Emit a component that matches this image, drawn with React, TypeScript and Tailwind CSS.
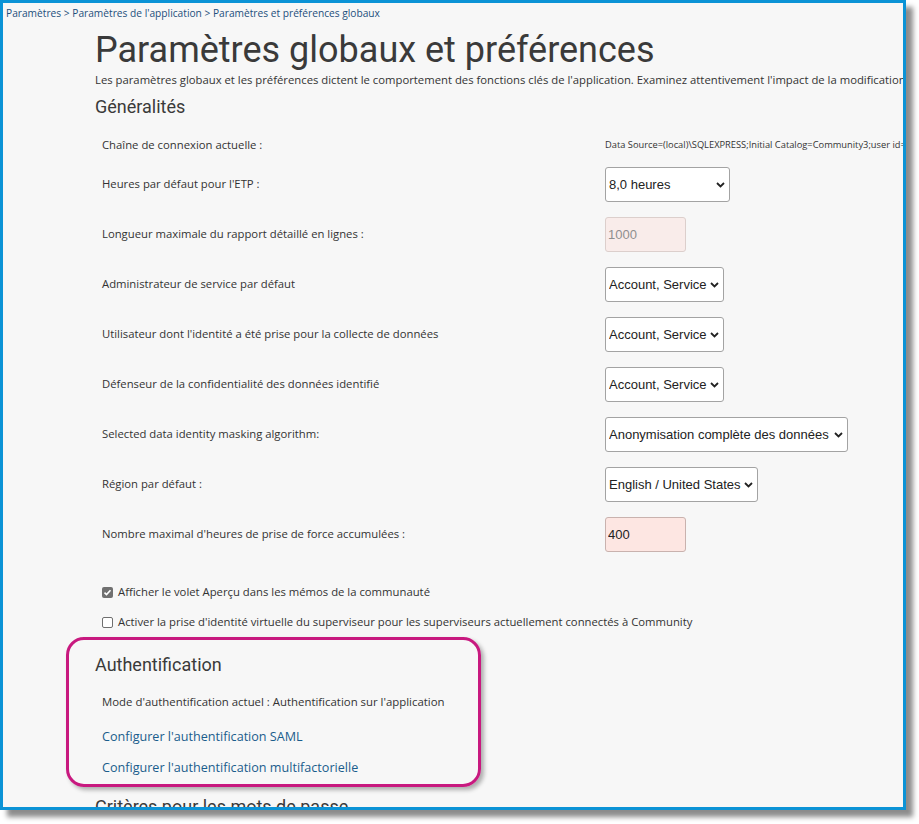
import React from 'react';

const ui = "font-['Open_Sans',sans-serif]";
const heading = "font-['Roboto',sans-serif]";

type Field =
  | { kind: 'select'; label: string; value: string; width: string }
  | { kind: 'input'; label: string; value: string; disabled?: boolean };

const fields: Field[] = [
  { kind: 'select', label: "Heures par défaut pour l'ETP :", value: '8,0 heures', width: 'w-[125px]' },
  { kind: 'input', label: 'Longueur maximale du rapport détaillé en lignes :', value: '1000', disabled: true },
  { kind: 'select', label: 'Administrateur de service par défaut', value: 'Account, Service', width: 'w-[119px]' },
  { kind: 'select', label: "Utilisateur dont l'identité a été prise pour la collecte de données", value: 'Account, Service', width: 'w-[119px]' },
  { kind: 'select', label: 'Défenseur de la confidentialité des données identifié', value: 'Account, Service', width: 'w-[119px]' },
  { kind: 'select', label: 'Selected data identity masking algorithm:', value: 'Anonymisation complète des données', width: 'w-[243px]' },
  { kind: 'select', label: 'Région par défaut :', value: 'English / United States', width: 'w-[153px]' },
  { kind: 'input', label: "Nombre maximal d'heures de prise de force accumulées :", value: '400' },
];

const Chevron = () => (
  <svg width="9" height="6" viewBox="0 0 9 6" className="pointer-events-none absolute right-[5px] top-1/2 -translate-y-1/2">
    <path d="M1 1l3.5 3.5L8 1" fill="none" stroke="#222" strokeWidth="1.8" />
  </svg>
);

const SelectBox = ({ value, width }: { value: string; width: string }) => (
  <div className={`relative h-[35px] shrink-0 ${width}`}>
    <select
      defaultValue={value}
      className="h-full w-full appearance-none rounded-[3px] border border-[#a3a3a3] bg-white pl-[3px] pr-[12px] font-['Liberation_Sans',Arial,sans-serif] text-[13px] text-[#222] outline-none"
    >
      <option>{value}</option>
    </select>
    <Chevron />
  </div>
);

const NumberBox = ({ value, disabled }: { value: string; disabled?: boolean }) => (
  <input
    defaultValue={value}
    disabled={disabled}
    className={
      disabled
        ? "h-[35px] w-[81px] shrink-0 rounded-[3px] border border-[#dccfcc] bg-[#f9ecea] px-[2px] font-['Liberation_Sans',Arial,sans-serif] text-[13px] text-[#8f8f8f]"
        : "h-[35px] w-[81px] shrink-0 rounded-[3px] border border-[#c9b2ae] bg-[#fde6e2] px-[2px] font-['Liberation_Sans',Arial,sans-serif] text-[13px] text-[#222]"
    }
  />
);

const Check = ({ checked }: { checked?: boolean }) =>
  checked ? (
    <span className="flex h-[11px] w-[11px] shrink-0 items-center justify-center rounded-[2px] bg-[#707070]">
      <svg width="9" height="9" viewBox="0 0 9 9">
        <path d="M1.5 4.6l2 2 4-4.4" fill="none" stroke="#fff" strokeWidth="1.6" />
      </svg>
    </span>
  ) : (
    <span className="h-[11px] w-[11px] shrink-0 rounded-[2px] border border-[#6f6f6f] bg-white" />
  );

const App: React.FC = () => {
  return (
    <div className="h-[824px] w-[919px] overflow-hidden bg-white">
      <div className="h-[810px] w-[906px] overflow-hidden border-[3px] border-[#0b93d6] bg-[#f7f7f7] shadow-[7px_7px_5px_rgba(0,0,0,0.45)]">
        {/* breadcrumb */}
        <div className={`${ui} whitespace-nowrap pl-[3px] pt-[2px] text-[10.2px] leading-[16px] text-[#1d4f7c]`}>
          Paramètres &gt; Paramètres de l'application &gt; Paramètres et préférences globaux
        </div>

        <div className="ml-[92px]">
          <h1 className={`${heading} mt-[9px] whitespace-nowrap text-[36px] leading-[40px] text-[#3a3a3a]`}>
            Paramètres globaux et préférences
          </h1>
          <p className={`${ui} mt-[2px] whitespace-nowrap text-[11.3px] leading-[16px] text-[#333]`}>
            Les paramètres globaux et les préférences dictent le comportement des fonctions clés de l'application. Examinez attentivement l'impact de la modification de ces paramètres.
          </p>
          <h2 className={`${heading} mt-[7px] text-[18px] leading-[24px] text-[#3a3a3a]`}>Généralités</h2>

          {/* settings */}
          <div className={`${ui} ml-[7px] mt-[17px] text-[11.3px] text-[#333]`}>
            <div className="flex h-[18px] items-center">
              <span className="w-[503px] shrink-0">Chaîne de connexion actuelle :</span>
              <span className="whitespace-nowrap text-[9.3px]">
                Data Source=(local)\SQLEXPRESS;Initial Catalog=Community3;user id=sa;password=********
              </span>
            </div>
            <div className="mt-[13px] flex flex-col gap-[15px]">
              {fields.map((f, i) => (
                <div key={i} className="flex items-center">
                  <span className="w-[503px] shrink-0">{f.label}</span>
                  {f.kind === 'select' && <SelectBox value={f.value} width={f.width} />}
                  {f.kind === 'input' && <NumberBox value={f.value} disabled={f.disabled} />}
                </div>
              ))}
            </div>

            <div className="mt-[32px] flex h-[16px] items-center gap-[5px]">
              <Check checked />
              <span>Afficher le volet Aperçu dans les mémos de la communauté</span>
            </div>
            <div className="mt-[14px] flex h-[16px] items-center gap-[5px]">
              <Check />
              <span>Activer la prise d'identité virtuelle du superviseur pour les superviseurs actuellement connectés à Community</span>
            </div>
          </div>

          {/* authentication */}
          <div className="-ml-[29px] mt-[7px] h-[150px] w-[415px] rounded-[18px] border-[3px] border-[#c8197f] pl-[26px] pt-[13px] shadow-[3px_3px_4px_rgba(0,0,0,0.3)]">
            <h2 className={`${heading} text-[18px] leading-[24px] text-[#3a3a3a]`}>Authentification</h2>
            <div className={`${ui} ml-[7px]`}>
              <p className="mt-[17px] text-[11.4px] leading-[16px] text-[#333]">
                Mode d'authentification actuel : Authentification sur l'application
              </p>
              <a href="#" className="mt-[18px] block text-[12.6px] leading-[18px] text-[#1a5d8c]">
                Configurer l'authentification SAML
              </a>
              <a href="#" className="mt-[13px] block text-[12.6px] leading-[18px] text-[#1a5d8c]">
                Configurer l'authentification multifactorielle
              </a>
            </div>
          </div>

          <h2 className={`${heading} mt-[8px] text-[18px] leading-[24px] text-[#3a3a3a]`}>
            Critères pour les mots de passe
          </h2>
        </div>
      </div>
    </div>
  );
};

export default App;
